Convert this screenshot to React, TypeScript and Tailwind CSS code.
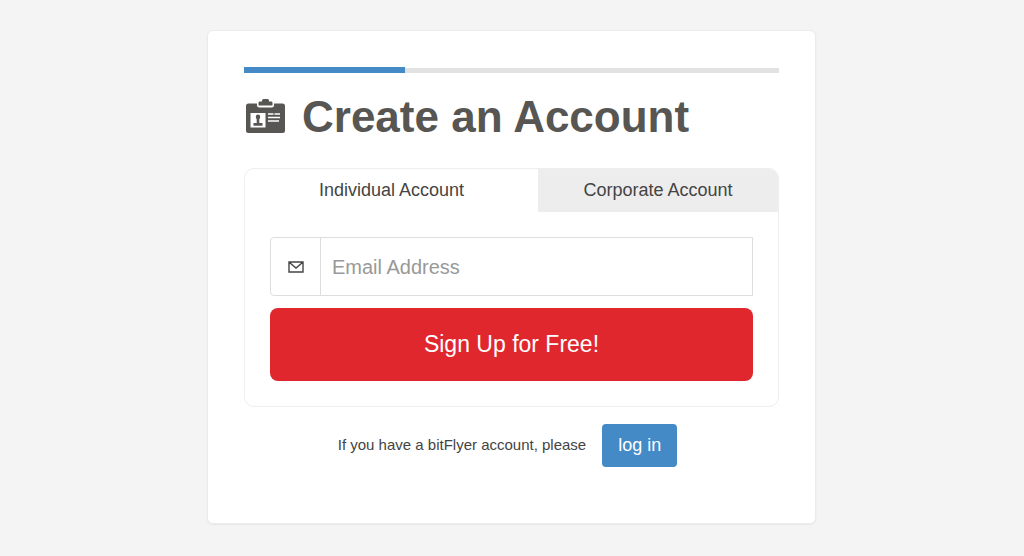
export default function App() {
  return (
    <div className="min-h-screen bg-[#f4f4f4] pr-4 pl-[15px] pt-[30px] pb-8 font-['Liberation_Sans',Arial,sans-serif] text-[#444444]">
      <main className="mx-auto w-full max-w-[609px] rounded-md border border-[#ebebeb] bg-white px-9 pt-9 pb-14 shadow-xs">
        <div role="progressbar" aria-label="Sign up progress" aria-valuenow={30} className="flex h-1.5 items-end">
          <div className="h-1.5 w-[30%] bg-[#438ac7]" />
          <div className="h-[5px] flex-1 bg-[#e2e2e2]" />
        </div>

        <h1 className="mt-5 flex items-center gap-4 pl-[2px] text-[44px] leading-[48px] font-bold text-[#575652]">
          <svg viewBox="0 0 40 36" className="h-9 w-10 shrink-0" aria-hidden="true">
            <path
              fill="currentColor"
              d="M2.500 4.500H11V6a2.500 2.500 0 0 0 2.500 2.500h12A2.500 2.500 0 0 0 28 6V4.500h8.500A2.500 2.500 0 0 1 39 7v24.500a2.500 2.500 0 0 1-2.500 2.500h-34A2.500 2.500 0 0 1 0 31.500V7a2.500 2.500 0 0 1 2.500-2.500Z"
            />
            <path fill="currentColor" d="M12.500 3.800q0-1.300 1.300-1.300H16V1.500Q16 0 17.500 0h4Q23 0 23 1.500v1h2.200q1.300 0 1.300 1.300V6.500h-14Z" />
            <path fill="white" d="M4.500 14h15v14.500h-15Z" />
            <path
              fill="currentColor"
              d="M12 15.500a2.200 2.200 0 0 1 2.200 2.200c0 1.300-.5 2-.9 2.600V24h3.200v2.800h-9V24h3.200v-3.700c-.4-.6-.9-1.300-.9-2.600a2.200 2.200 0 0 1 2.200-2.200Z"
            />
            <path stroke="white" strokeWidth="1.500" d="M22 15h5.500M28.500 15H34M22 18.500h12M22 22h11" />
          </svg>
          Create an Account
        </h1>

        <section className="mt-[27px] overflow-hidden rounded-[10px] border border-[#eeeeee]">
          <div role="tablist" className="flex text-[18px] leading-[43px]">
            <button type="button" role="tab" aria-selected="true" className="w-[55%]">
              Individual Account
            </button>
            <button type="button" role="tab" aria-selected="false" className="flex-1 bg-[#ededed]">
              Corporate Account
            </button>
          </div>
          <form className="px-[25px] pt-[25px] pb-[25px]">
            <div className="flex h-[59px] rounded-l border border-[#dddddd]">
              <label htmlFor="email" aria-label="Email Address" className="flex w-[50px] items-center justify-center border-r border-[#dddddd]">
                <svg viewBox="0 0 16 12" className="h-3 w-4" fill="none" stroke="currentColor" strokeWidth="1.400" aria-hidden="true">
                  <path d="M1 1h14v10H1ZM1.500 1.500 8 7l6.500-5.500" />
                </svg>
              </label>
              <input id="email" type="email" placeholder="Email Address" className="min-w-0 flex-1 px-[11px] text-[20px] outline-none placeholder:text-[#999999]" />
            </div>
            <button type="button" className="mt-3 h-[73px] w-full rounded-lg bg-[#e1272e] text-[23px] text-white">
              Sign Up for Free!
            </button>
          </form>
        </section>

        <div className="mt-[17px] flex items-center justify-center gap-4 pr-2 text-[15px]">
          <span>If you have a bitFlyer account, please</span>
          <a href="#login" className="rounded bg-[#438ac7] px-4 text-[18px] leading-[43px] text-white">
            log in
          </a>
        </div>
      </main>
    </div>
  );
}
